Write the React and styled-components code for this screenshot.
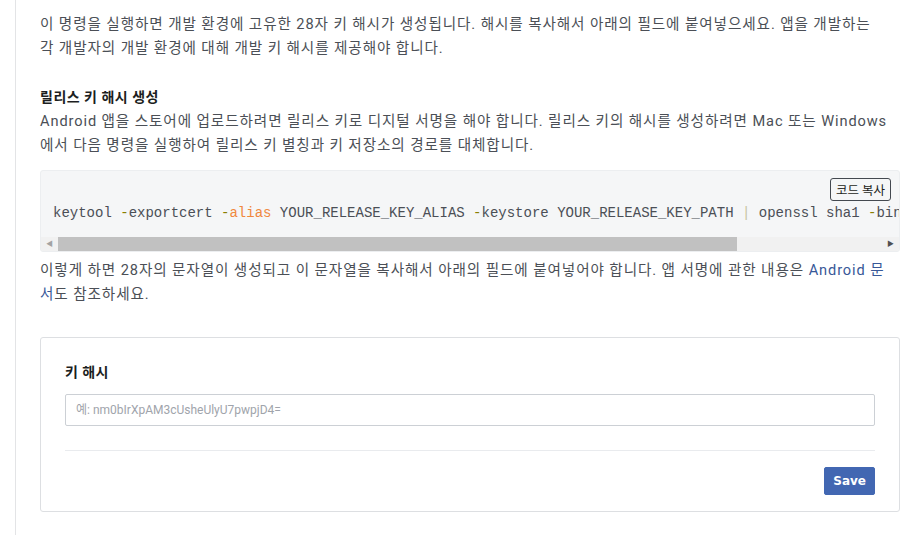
import styled, { createGlobalStyle } from "styled-components";

const GlobalStyle = createGlobalStyle`
  html, body {
    margin: 0;
    padding: 0;
    background: #fff;
  }
  body {
    font-family: Roboto, "Noto Sans CJK KR", sans-serif;
    font-feature-settings: "fwid";
    color: #4b4f56;
  }
`;

const Page = styled.div`
  width: 919px;
  height: 535px;
  overflow: hidden;
  padding-left: 15px;
  box-sizing: border-box;
`;

const Column = styled.main`
  border-left: 1px solid #e3e4e6;
  padding: 12px 19px 0 24px;
  height: 100%;
  box-sizing: border-box;
`;

const Text = styled.p`
  margin: 0 0 ${(p) => p.$after || 0}px;
  font-size: 14.6px;
  line-height: 24px;
  letter-spacing: 0.9px;
  white-space: nowrap;
`;

const Heading = styled.h4`
  margin: 0;
  font-size: 14px;
  line-height: 24px;
  font-weight: bold;
  letter-spacing: 0.5px;
  color: #1c1e21;
`;

const Link = styled.a`
  color: #385898;
  text-decoration: none;
`;

const CodeBlock = styled.div`
  position: relative;
  margin: 13px 0 6px;
  width: 860px;
  background: #f5f6f7;
  border: 1px solid #eceef0;
  border-radius: 3px;
  box-sizing: border-box;
  overflow: hidden;
`;

const CopyButton = styled.button`
  position: absolute;
  top: 7px;
  right: 8px;
  height: 23px;
  padding: 0 5px;
  font-family: Roboto, "Noto Sans CJK KR", sans-serif;
  font-feature-settings: "fwid";
  font-size: 12.5px;
  color: #1c1e21;
  background: #f5f6f7;
  border: 1px solid #444950;
  border-radius: 3px;
`;

const Code = styled.pre`
  margin: 0;
  padding: 33px 12px 15px;
  font-family: "Liberation Mono", "Courier New", monospace;
  font-size: 14px;
  line-height: 18px;
  color: #4b4f56;
  white-space: pre;
  overflow: hidden;
`;

const Tok = styled.span`
  color: ${(p) =>
    p.$kind === "flag" ? "#8a7f00" : p.$kind === "kw" ? "#f0883e" : p.$kind === "pipe" ? "#c8c3a0" : "inherit"};
`;

const Scrollbar = styled.div`
  display: flex;
  align-items: center;
  height: 14px;
  background: #f1f1f1;
`;

const Arrow = styled.span`
  width: 17px;
  display: flex;
  justify-content: center;
  color: ${(p) => (p.$dim ? "#a3a3a3" : "#505050")};
  font-size: 7px;
  line-height: 14px;
`;

const Track = styled.div`
  flex: 1;
  height: 100%;
`;

const Thumb = styled.div`
  height: 100%;
  background: #c1c1c1;
`;

const Card = styled.section`
  margin-top: 31px;
  width: 860px;
  box-sizing: border-box;
  border: 1px solid #dddfe2;
  border-radius: 3px;
  padding: 22px 24px 16px;
`;

const Label = styled.label`
  display: block;
  font-size: 14px;
  line-height: 24px;
  font-weight: bold;
  letter-spacing: 0.4px;
  color: #1c1e21;
  margin-bottom: 10px;
`;

const Input = styled.input`
  display: block;
  width: 100%;
  height: 32px;
  box-sizing: border-box;
  border: 1px solid #ccd0d5;
  border-radius: 2px;
  padding: 0 10px;
  font-family: Roboto, "Noto Sans CJK KR", sans-serif;
  font-size: 12px;
  color: #1c1e21;

  &::placeholder {
    color: #a0a4ab;
  }
`;

const Divider = styled.hr`
  margin: 24px 0 16px;
  border: none;
  border-top: 1px solid #e9ebee;
`;

const Footer = styled.div`
  display: flex;
  justify-content: flex-end;
`;

const SaveButton = styled.button`
  height: 28px;
  padding: 0 8px;
  background: #4267b2;
  border: 1px solid #4267b2;
  border-radius: 2px;
  color: #fff;
  font-family: "DejaVu Sans", sans-serif;
  font-weight: bold;
  font-size: 12px;
`;

export default function App() {
  return (
    <Page>
      <GlobalStyle />
      <Column>
        <Text $after={25}>
          이 명령을 실행하면 개발 환경에 고유한 28자 키 해시가 생성됩니다. 해시를 복사해서 아래의 필드에 붙여넣으세요. 앱을 개발하는
          <br />각 개발자의 개발 환경에 대해 개발 키 해시를 제공해야 합니다.
        </Text>
        <Heading>릴리스 키 해시 생성</Heading>
        <Text>
          Android 앱을 스토어에 업로드하려면 릴리스 키로 디지털 서명을 해야 합니다. 릴리스 키의 해시를 생성하려면 Mac 또는 Windows
          <br />
          에서 다음 명령을 실행하여 릴리스 키 별칭과 키 저장소의 경로를 대체합니다.
        </Text>
        <CodeBlock>
          <CopyButton>코드 복사</CopyButton>
          <Code>
            keytool <Tok $kind="flag">-</Tok>exportcert <Tok $kind="flag">-</Tok>
            <Tok $kind="kw">alias</Tok> YOUR_RELEASE_KEY_ALIAS <Tok $kind="flag">-</Tok>keystore YOUR_RELEASE_KEY_PATH{" "}
            <Tok $kind="pipe">|</Tok> openssl sha1 <Tok $kind="flag">-</Tok>binary <Tok $kind="pipe">|</Tok> openssl base64
          </Code>
          <Scrollbar>
            <Arrow $dim>◀</Arrow>
            <Track>
              <Thumb style={{ width: `${(679 / 824) * 100}%` }} />
            </Track>
            <Arrow>▶</Arrow>
          </Scrollbar>
        </CodeBlock>
        <Text>
          이렇게 하면 28자의 문자열이 생성되고 이 문자열을 복사해서 아래의 필드에 붙여넣어야 합니다. 앱 서명에 관한 내용은{" "}
          <Link href="#">
            Android 문<br />서
          </Link>
          도 참조하세요.
        </Text>
        <Card>
          <Label>키 해시</Label>
          <Input placeholder="예: nm0bIrXpAM3cUsheUlyU7pwpjD4=" />
          <Divider />
          <Footer>
            <SaveButton>Save</SaveButton>
          </Footer>
        </Card>
      </Column>
    </Page>
  );
}
